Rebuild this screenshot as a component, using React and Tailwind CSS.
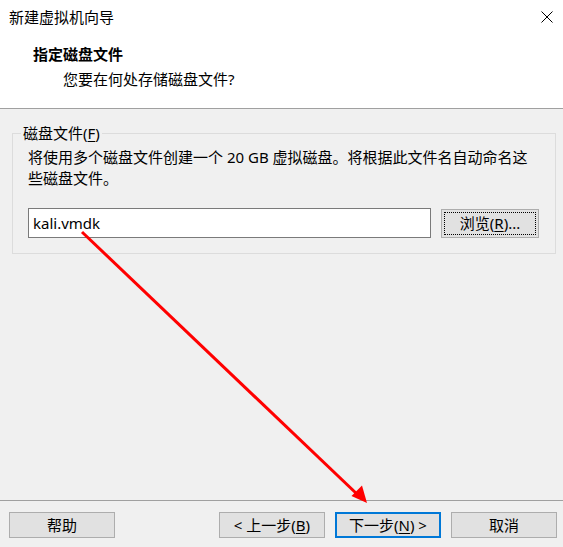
function CloseIcon() {
  return (
    <svg width="12" height="12" viewBox="0 0 12 12" className="block">
      <path d="M0.5 0.5 L11.5 11.5 M11.5 0.5 L0.5 11.5" stroke="#000" strokeWidth="1" fill="none" />
    </svg>
  )
}

function U({ children }) {
  return <span className="underline underline-offset-2">{children}</span>
}

function WinButton({ children, primary, className = '' }) {
  return (
    <button
      type="button"
      className={
        'flex h-[26px] w-[106px] items-center justify-center bg-[#e1e1e1] text-[15px] leading-[20px] text-black ' +
        (primary ? 'border-2 border-[#0078d7] ' : 'border border-[#adadad] ') +
        className
      }
    >
      {children}
    </button>
  )
}

function Arrow() {
  return (
    <svg className="pointer-events-none absolute left-0 top-0" width="563" height="547" viewBox="0 0 563 547">
      <line x1="82" y1="232" x2="358" y2="495" stroke="#ff0000" strokeWidth="3" />
      <polygon points="367,503 351.5,496 362,485.5" fill="#ff0000" />
    </svg>
  )
}

export default function App() {
  return (
    <div
      className="relative flex h-[547px] w-[563px] flex-col bg-[#f0f0f0] text-black"
      style={{ fontFamily: '"Noto Sans", "Noto Sans CJK SC", sans-serif' }}
    >
      <div className="h-[109px] border-b border-[#a0a0a0] bg-white">
        <div className="flex items-center justify-between pl-[9px] pr-[10px] pt-[7px]">
          <span className="text-[15px] leading-[20px]">新建虚拟机向导</span>
          <CloseIcon />
        </div>
        <div className="mt-[17px] pl-[33px] text-[15px] font-bold leading-[20px]">指定磁盘文件</div>
        <div className="mt-[5px] pl-[63px] text-[15px] leading-[20px]">您要在何处存储磁盘文件?</div>
      </div>

      <div className="flex-1 px-[12px] pt-[14px]">
        <fieldset className="w-[544px] border border-[#dcdcdc] px-[15px] pb-[15px]">
          <legend className="ml-[-7px] px-[2px] text-[15px] leading-[20px]">
            磁盘文件(<U>F</U>)
          </legend>
          <p className="pt-[4px] text-[15px] leading-[21px]">
            将使用多个磁盘文件创建一个 20 GB 虚拟磁盘。将根据此文件名自动命名这
            <br />
            些磁盘文件。
          </p>
          <div className="mt-[19px] flex items-center gap-[10px]">
            <div className="flex h-[30px] w-[403px] items-center border border-[#7a7a7a] bg-white pl-[4px] text-[15px] leading-[20px]">
              kali.vmdk
            </div>
            <button
              type="button"
              className="h-[29px] w-[98px] border border-[#adadad] bg-[#e1e1e1] p-[2px]"
            >
              <span className="flex h-full w-full items-center justify-center border border-dotted border-black text-[15px] leading-[20px]">
                浏览(<U>R</U>)...
              </span>
            </button>
          </div>
        </fieldset>
      </div>

      <div className="flex h-[47px] items-start border-t border-[#a0a0a0] pl-[9px] pt-[11px]">
        <WinButton>帮助</WinButton>
        <WinButton className="ml-[104px]">&lt; 上一步(<U>B</U>)</WinButton>
        <WinButton primary className="ml-[10px]">下一步(<U>N</U>) &gt;</WinButton>
        <WinButton className="ml-[10px]">取消</WinButton>
      </div>

      <Arrow />
    </div>
  )
}
